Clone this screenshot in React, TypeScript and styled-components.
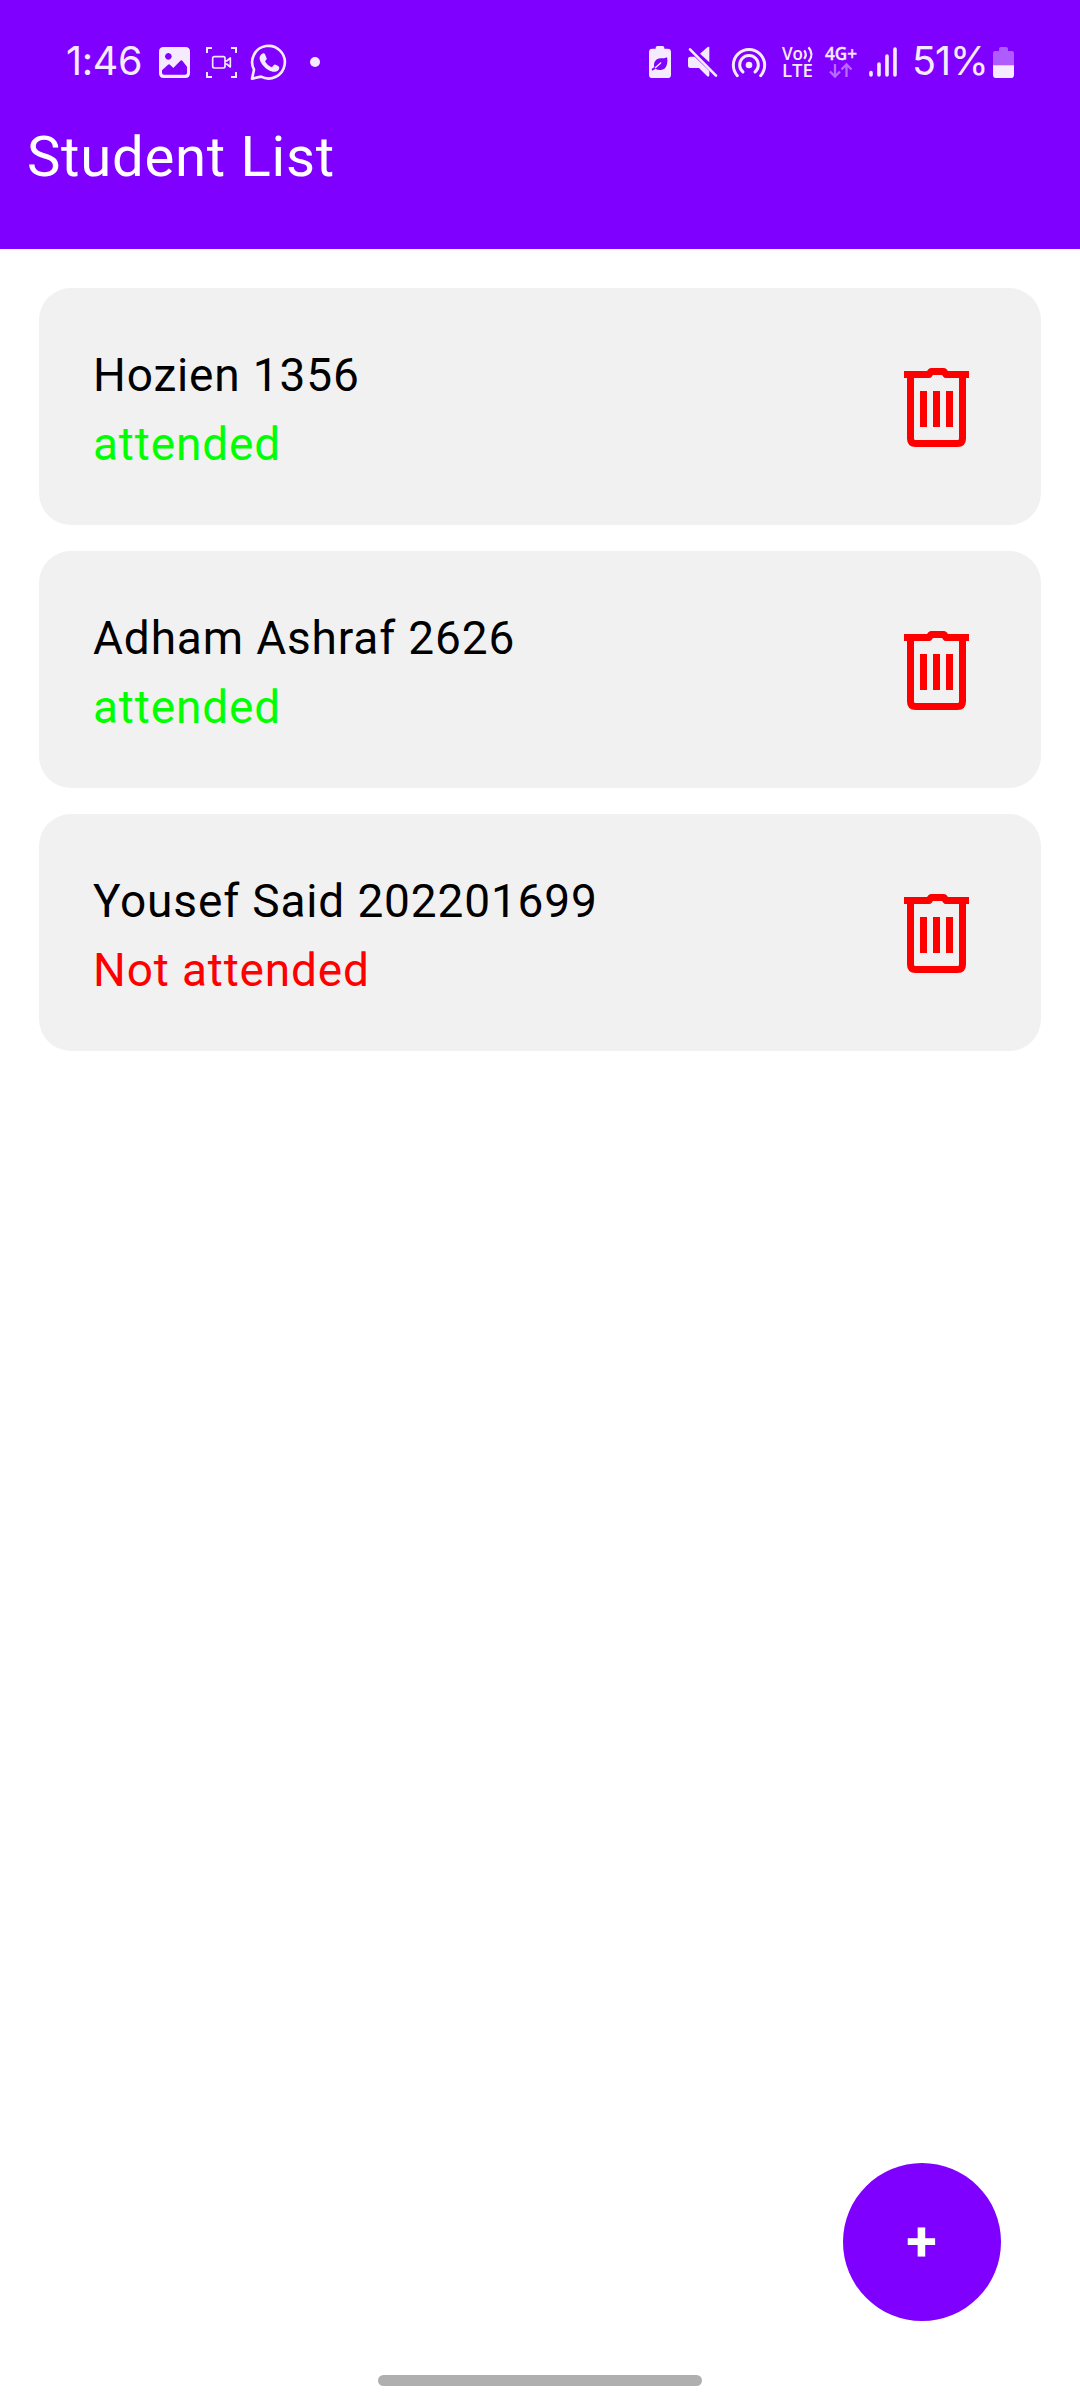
import React from "react";
import styled, { createGlobalStyle } from "styled-components";

const PURPLE = "#7f00ff";
const INK = "#f6eaff";
const DIM = "#b76cff";

const GlobalStyle = createGlobalStyle`
  * { box-sizing: border-box; }
  body { margin: 0; background: #ffffff; }
`;

const Screen = styled.div`
  display: flex;
  flex-direction: column;
  width: 1080px;
  height: 2400px;
  background: #ffffff;
  font-family: Roboto, "Liberation Sans", sans-serif;
`;

const Header = styled.header`
  height: 249px;
  background: ${PURPLE};
`;

const StatusBar = styled.div`
  display: flex;
  justify-content: space-between;
  height: 124px;
  padding: 0 66px 0 66px;
`;

const StatusGroup = styled.div`
  display: flex;
  align-items: center;
  height: 124px;
`;

const StatusText = styled.span<{ $width: number; $spacing: number; $gap?: number }>`
  width: ${(p) => p.$width}px;
  margin-left: ${(p) => p.$gap ?? 0}px;
  padding-bottom: 2px;
  font-family: Inter, Roboto, sans-serif;
  font-size: 39.5px;
  line-height: 46px;
  font-weight: 400;
  letter-spacing: ${(p) => p.$spacing}px;
  white-space: nowrap;
  color: ${INK};
`;

const Glyph = styled.svg<{ $gap: number }>`
  display: block;
  flex: none;
  margin-left: ${(p) => p.$gap}px;
  overflow: visible;
`;

const Title = styled.h1`
  margin: 0;
  padding-left: 27px;
  font-size: 56.25px;
  line-height: 66px;
  font-weight: 400;
  letter-spacing: 0.72px;
  color: #ffffff;
`;

const List = styled.main`
  flex: 1;
  display: flex;
  flex-direction: column;
  gap: 26px;
  padding: 39px 39px 0;
`;

const Card = styled.article`
  display: flex;
  justify-content: space-between;
  align-items: center;
  height: 237px;
  padding: 3px 71px 0 54px;
  border-radius: 32px;
  background: #f1f1f1;
`;

const Details = styled.div`
  display: flex;
  flex-direction: column;
  padding-top: 4px;
  font-size: 46px;
  line-height: 69px;
  letter-spacing: 0.85px;
`;

const Name = styled.span`
  color: #000000;
`;

const Status = styled.span<{ $attended: boolean }>`
  color: ${(p) => (p.$attended ? "#00ff00" : "#ff0000")};
`;

const DeleteButton = styled.button`
  display: block;
  padding: 0;
  border: 0;
  background: none;
`;

const TrashGlyph = styled.svg`
  display: block;
`;

const AddButton = styled.button`
  display: flex;
  align-items: center;
  justify-content: center;
  align-self: flex-end;
  width: 158px;
  height: 158px;
  margin: 0 79px 54px 0;
  padding: 0 1px 2px 0;
  border: 0;
  border-radius: 50%;
  background: ${PURPLE};
  color: #ffffff;
  font-family: Roboto, sans-serif;
  font-size: 56px;
  line-height: 66px;
  font-weight: 700;
`;

const HomeHandle = styled.div`
  align-self: center;
  width: 324px;
  height: 11px;
  margin-bottom: 14px;
  border-radius: 6px;
  background: #afafaf;
`;

const ImageIcon = () => (
  <Glyph $gap={18} width="31" height="31" viewBox="0 0 93 93">
    <path
      fill={INK}
      fillRule="evenodd"
      d="M14 0H79Q93 0 93 14V79Q93 93 79 93H14Q0 93 0 79V14Q0 0 14 0ZM28 18a10 10 0 1 0 .1 0ZM9 70V77Q9 83 15 83H78Q84 83 84 77V59L70 41Q67 38 64 41L43 63L33 53Q30 50 27 53Z"
    />
  </Glyph>
);

const CaptureIcon = () => (
  <Glyph $gap={16} width="31" height="31" viewBox="0 0 93 93">
    <g fill="none" stroke={INK} strokeWidth="5">
      <path d="M3 18V3H18M75 3H90V18M90 75V90H75M18 90H3V75" strokeWidth="6" />
      <rect x="20" y="29" width="37" height="34" rx="5" />
      <path d="M57 42H62L73 33V60L62 51H57" strokeLinejoin="round" />
    </g>
  </Glyph>
);

const WhatsAppIcon = () => (
  <Glyph $gap={13} width="37" height="37" viewBox="0 0 111 111">
    <path
      fill="none"
      stroke={INK}
      strokeWidth="8"
      strokeLinejoin="round"
      d="M6 104L12 77A49 49 0 1 1 33 98Z"
    />
    <path
      fill={INK}
      d="M37 29C40 27 44 28 45 31L50 43C51 45 48 49 45 52C50 61 57 67 65 70C68 67 71 63 73 62C76 61 84 66 87 68C90 75 84 82 75 83C56 86 26 58 29 39C30 34 34 31 37 29Z"
    />
  </Glyph>
);

const MoreDot = () => (
  <Glyph $gap={23} width="10" height="10" viewBox="0 0 10 10">
    <circle cx="5" cy="5" r="5" fill={INK} />
  </Glyph>
);

const PowerSaveIcon = () => (
  <Glyph $gap={0} width="22" height="32" viewBox="0 0 66 96">
    <path
      fill={INK}
      d="M20 8V5Q20 0 25 0H41Q46 0 46 5V8H56Q66 8 66 18V86Q66 96 56 96H10Q0 96 0 86V18Q0 8 10 8Z"
    />
    <path fill={PURPLE} d="M54 34C58 51 52 72 36 72C30 72 24 71 20 68L9 74L8 69L16 63C12 50 21 37 35 37C43 37 49 37 54 34Z" />
    <path d="M19 65L35 51" stroke={INK} strokeWidth="4" strokeLinecap="round" />
  </Glyph>
);

const MuteIcon = () => (
  <Glyph $gap={17} width="29" height="30" viewBox="0 0 87 90">
    <path fill={INK} d="M64 0V46L36 20L58 1Q62 -2 64 0ZM7 29H20L64 72V85Q63 92 57 87L33 63H7Q0 63 0 56V36Q0 29 7 29Z" />
    <path d="M6 7L84 86" stroke={INK} strokeWidth="8" strokeLinecap="round" />
  </Glyph>
);

const HotspotIcon = () => (
  <Glyph $gap={15} width="34" height="31" viewBox="0 0 102 93">
    <circle cx="51" cy="54" r="10" fill={INK} />
    <g fill="none" stroke={INK} strokeWidth="9" strokeLinecap="round">
      <path d="M16 86A47 47 0 1 1 86 86" />
      <path d="M33 75A28 28 0 1 1 69 75" />
    </g>
  </Glyph>
);

const VolteIcon = () => (
  <Glyph $gap={16} width="32" height="32" viewBox="0 0 32 32">
    <g fill={INK} fontFamily="Open Sans, sans-serif" fontWeight="600" fontSize="18">
      <text x="0" y="13.5" textLength="21" lengthAdjust="spacingAndGlyphs">Vo</text>
      <text x="0" y="31" textLength="31" lengthAdjust="spacingAndGlyphs">LTE</text>
    </g>
    <path
      d="M22.2 4.3Q25.4 8.5 22.2 12.8M26.5 1.2Q32.5 8.5 26.5 15.8"
      fill="none"
      stroke={INK}
      strokeWidth="2.2"
    />
  </Glyph>
);

const NetworkIcon = () => (
  <Glyph $gap={11} width="32" height="32" viewBox="0 0 32 32">
    <text
      x="0"
      y="13.5"
      fill={INK}
      stroke={INK}
      strokeWidth="0.3"
      fontFamily="Open Sans, sans-serif"
      fontWeight="600"
      fontSize="17.5"
      textLength="32"
      lengthAdjust="spacingAndGlyphs"
    >
      4G+
    </text>
    <path
      d="M10 18V30M5 25.5L10 30.5L15 25.5M21.5 31V18.5M16.5 23.5L21.5 18.5L26.5 23.5"
      fill="none"
      stroke={DIM}
      strokeWidth="2.3"
    />
  </Glyph>
);

const SignalIcon = () => (
  <Glyph $gap={12} width="28" height="30" viewBox="0 0 28 30">
    <path
      d="M2 25.5V28M10 17V28M18 9V28M26 2V28"
      stroke={INK}
      strokeWidth="3.6"
      strokeLinecap="round"
    />
  </Glyph>
);

const BatteryIcon = () => (
  <Glyph $gap={7} width="21" height="31" viewBox="0 0 63 93">
    <path fill={DIM} fillOpacity="0.85" d="M18 12V6Q18 0 24 0H39Q45 0 45 6V12H57Q63 12 63 18V56H0V18Q0 12 6 12Z" />
    <path fill={INK} d="M0 55H63V83Q63 93 53 93H10Q0 93 0 83Z" />
  </Glyph>
);

const TrashIcon = () => (
  <TrashGlyph width="66" height="80" viewBox="0 0 66 80">
    <g fill="none" stroke="#ff0000" strokeWidth="7">
      <path d="M0 6.5H25L27 3.5H40L42 6.5H65" strokeLinejoin="round" />
      <path d="M6.5 6V70.5Q6.5 75.5 11.5 75.5H53.5Q58.5 75.5 58.5 70.5V6" />
      <path d="M19.5 23V59M32.5 23V59M45.5 23V59" />
    </g>
  </TrashGlyph>
);

interface Student {
  name: string;
  id: string;
  attended: boolean;
}

const students: Student[] = [
  { name: "Hozien", id: "1356", attended: true },
  { name: "Adham Ashraf", id: "2626", attended: true },
  { name: "Yousef Said", id: "202201699", attended: false },
];

export default function App() {
  return (
    <>
      <GlobalStyle />
      <Screen>
        <Header>
          <StatusBar>
            <StatusGroup>
              <StatusText $width={75} $spacing={-0.3}>1:46</StatusText>
              <ImageIcon />
              <CaptureIcon />
              <WhatsAppIcon />
              <MoreDot />
            </StatusGroup>
            <StatusGroup>
              <PowerSaveIcon />
              <MuteIcon />
              <HotspotIcon />
              <VolteIcon />
              <NetworkIcon />
              <SignalIcon />
              <StatusText $width={74} $spacing={-1} $gap={15}>51%</StatusText>
              <BatteryIcon />
            </StatusGroup>
          </StatusBar>
          <Title>Student List</Title>
        </Header>
        <List>
          {students.map((s) => (
            <Card key={s.id}>
              <Details>
                <Name>
                  {s.name} {s.id}
                </Name>
                <Status $attended={s.attended}>{s.attended ? "attended" : "Not attended"}</Status>
              </Details>
              <DeleteButton aria-label="Delete">
                <TrashIcon />
              </DeleteButton>
            </Card>
          ))}
        </List>
        <AddButton>+</AddButton>
        <HomeHandle />
      </Screen>
    </>
  );
}
